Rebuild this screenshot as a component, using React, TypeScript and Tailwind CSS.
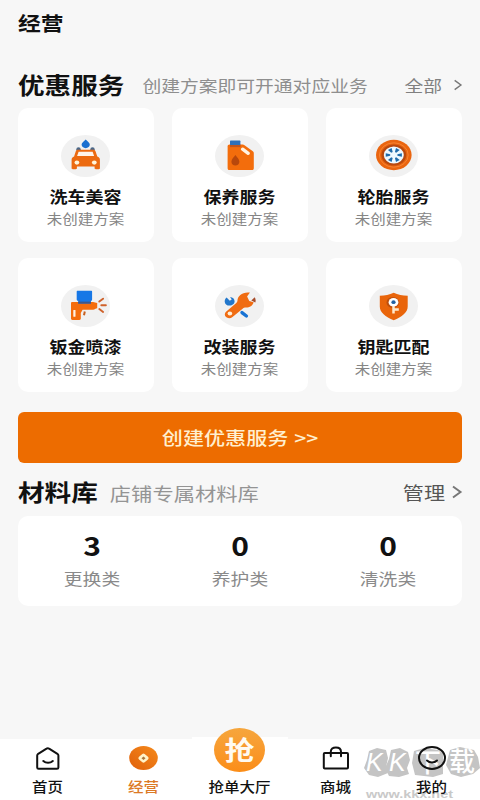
import type { ReactNode } from "react";
import clsx from "clsx";

type Service = { title: string; icon: ReactNode };

// CJK text is drawn slightly flattened everywhere in this skin
function Label({ className, children }: { className?: string; children: ReactNode }) {
  return (
    <span className={clsx("inline-block origin-center scale-y-[0.86] whitespace-nowrap leading-none", className)}>
      {children}
    </span>
  );
}

function IconDisc({ children }: { children: ReactNode }) {
  return (
    <svg width="49" height="42" viewBox="0 0 49 42" className="block">
      <ellipse cx="24.5" cy="21" rx="24.5" ry="21" fill="#f1f1f1" />
      {children}
    </svg>
  );
}

function CarWashIcon() {
  return (
    <IconDisc>
      <path d="M24.7 4.4c1.6 1.7 4.1 3 4.1 5.2 0 2.1-1.8 3.6-4.1 3.6s-4.1-1.5-4.1-3.6c0-2.2 2.5-3.5 4.1-5.2z" fill="#1a6fd0" />
      <circle cx="17.5" cy="14.5" r="2.2" fill="#4b6788" />
      <circle cx="31.5" cy="14.5" r="2.2" fill="#4b6788" />
      <path
        d="M17 14.8h15.2c1.3 0 2 .5 2.4 1.6l1.7 5.2c1.6.6 2.6 1.6 2.6 3.2v8.3c0 .8-.4 1.2-1.2 1.2h-2.9c-.8 0-1.2-.4-1.2-1.2V31.5H15.9v1.6c0 .8-.4 1.2-1.2 1.2h-2.9c-.8 0-1.2-.4-1.2-1.2v-8.3c0-1.6 1-2.6 2.5-3.2l1.6-5.2c.4-1.1 1.1-1.6 2.3-1.6z"
        fill="#ec6a10"
      />
      <path d="M17.6 16.8h14l1.5 4.3H16.1z" fill="#fff4ea" />
      <ellipse cx="15.9" cy="27.6" rx="2.4" ry="2.1" fill="#fff4d8" />
      <ellipse cx="33.3" cy="27.6" rx="2.4" ry="2.1" fill="#fff4d8" />
    </IconDisc>
  );
}

function OilIcon() {
  return (
    <IconDisc>
      <path d="M14.6 9.6h13c.8 0 1.3.2 1.9.6l8 5.9c.9.7 1.3 1.4 1.3 2.5v14.6c0 1.2-.8 1.9-2 1.9H14.6c-1.2 0-2-.7-2-1.900V11.5c0-1.200.8-1.900 2-1.900z" fill="#f36d0c" />
      <rect x="15" y="9.5" width="10.5" height="2.6" fill="#c2541a" />
      <rect x="15" y="5.6" width="10.4" height="4.4" rx=".6" fill="#2f70b8" />
      <path d="M27.6 14.2l5.6 4.1" stroke="#fff3e2" strokeWidth="3.4" strokeLinecap="round" />
      <path d="M20.4 20c1.7 2.2 4 4.3 4 6.8 0 2.2-1.7 3.7-4 3.7s-4-1.5-4-3.7c0-2.5 2.3-4.6 4-6.8z" fill="#b8480c" />
    </IconDisc>
  );
}

function TireIcon() {
  return (
    <IconDisc>
      <ellipse cx="24.8" cy="20" rx="17.8" ry="15.2" fill="#ea650f" />
      <ellipse cx="24.8" cy="20" rx="14.4" ry="12.2" fill="none" stroke="#f98a3c" strokeWidth=".8" />
      <ellipse cx="24.8" cy="20" rx="12.4" ry="10.6" fill="#b9490e" />
      <ellipse cx="24.8" cy="20" rx="10" ry="8.6" fill="#eef9ff" />
      {[0, 60, 120, 180, 240, 300].map((angle) => (
        <path
          key={angle}
          d="M-1.9-7.2h3.8L.7-3.2H-.7z"
          transform={`translate(24.8 20) scale(1.12 .96) rotate(${angle + 30})`}
          fill="#1f6cab"
        />
      ))}
    </IconDisc>
  );
}

function SprayIcon() {
  return (
    <IconDisc>
      <path d="M10 18.5c0-.9.5-1.4 1.4-1.4h20.7c1.7 0 2.3.8 4.1 1v5.2c-1.8.2-2.4 1.5-4.1 1.5H21.6l-1.8 3.3v5.5c0 .9-.5 1.4-1.4 1.4h-7c-.9 0-1.4-.5-1.4-1.4z" fill="#f46d0d" />
      <path d="M15.7 6.7c0-.7.3-1 1-1h13.4c.7 0 1 .3 1 1v7.6c0 1-.4 1.5-1.2 1.8v2.5H17.2v-2.5c-1-.3-1.5-.8-1.5-1.8z" fill="#1677e6" />
      <path d="M17.2 16.6h12.7v2H17.2z" fill="#3f5787" />
      <rect x="12.3" y="25" width="2.2" height="6.8" rx=".5" fill="#fff3e6" />
      <path d="M23.8 26.5l-.8 3.7" stroke="#c8601f" strokeWidth="2" />
      <path d="M38.3 16.6l3.8-2.9M40.3 20.3h4.6M38.3 24l3.8 2.9" stroke="#cf622b" strokeWidth="1.9" strokeLinecap="round" />
    </IconDisc>
  );
}

function WrenchIcon() {
  return (
    <IconDisc>
      <path d="M11.6 12.5l3.2 3.3 1.9-1.3-1.6-2.5c2.7.3 4.5 1.9 4.5 4.3 0 2.5-2.1 4.3-5 4.3-2.8 0-4.9-1.8-4.9-4.2 0-1.5.7-2.9 1.9-3.9z" fill="#2277cb" />
      <path d="M27 27.6l4.4 3.4" stroke="#1873d4" strokeWidth="3.4" strokeLinecap="round" />
      <path
        d="M34.9 7.6l-2.8 3.8 2.2 4.7 4.3 1.1c-.9 3.4-4 5.5-7.9 5.4-1.2 0-2 .2-2.8.9L17.5 32c-1.9 1.6-4.9 1.6-6.5.1-1.7-1.5-1.6-3.9.3-5.5l10-8.5c.8-.7 1.2-1.5 1.2-2.5.1-4.8 4.9-8.9 12.4-8z"
        fill="#f06c12"
      />
      <ellipse cx="14.9" cy="28.6" rx="2.3" ry="2" fill="#fff0d8" />
      <path d="M36.3 15.5l3.4-3.2c1 1.5 1.2 3.4.6 5.3z" fill="#a64c2b" />
    </IconDisc>
  );
}

function KeyIcon() {
  return (
    <IconDisc>
      <path d="M24.7 7.7c4.3 2.1 8.6 2.8 14 3v10.7c0 6-5.7 10.3-14 13.9-8.3-3.6-13.9-7.9-13.9-13.9V10.7c5.3-.2 9.6-.9 13.9-3z" fill="#e9650b" />
      <ellipse cx="23.8" cy="17.4" rx="6.3" ry="5.5" fill="#bd500f" />
      <ellipse cx="24.5" cy="17.2" rx="4.9" ry="4.3" fill="#fff" />
      <ellipse cx="24.5" cy="17.2" rx="2.1" ry="1.9" fill="#2162a3" />
      <path d="M24.5 21v7.5M24.5 24.5h5.3" stroke="#ffe9cc" strokeWidth="2.5" />
    </IconDisc>
  );
}

function Chevron({ className, width }: { className: string; width: number }) {
  return (
    <svg viewBox="0 0 12 14" fill="none" stroke="currentColor" strokeWidth={width} className={className}>
      <path d="M2 1.5l7.5 5.5L2 12.5" />
    </svg>
  );
}

const services: Service[] = [
  { title: "洗车美容", icon: <CarWashIcon /> },
  { title: "保养服务", icon: <OilIcon /> },
  { title: "轮胎服务", icon: <TireIcon /> },
  { title: "钣金喷漆", icon: <SprayIcon /> },
  { title: "改装服务", icon: <WrenchIcon /> },
  { title: "钥匙匹配", icon: <KeyIcon /> },
];

const materials = [
  { count: 3, name: "更换类" },
  { count: 0, name: "养护类" },
  { count: 0, name: "清洗类" },
];

function ServiceCard({ title, icon }: Service) {
  return (
    <div className="flex h-[134px] flex-col items-center rounded-[10px] bg-white pt-[27px] pr-px">
      {icon}
      <Label className="mt-[10px] text-[18px] font-bold text-[#111]">{title}</Label>
      <Label className="mt-[6px] text-[15.5px] text-[#858585]">未创建方案</Label>
    </div>
  );
}

function HomeIcon() {
  return (
    <svg width="26" height="24" viewBox="0 0 26 24" fill="none" stroke="#111" strokeWidth="2" strokeLinecap="round" strokeLinejoin="round">
      <path d="M2.2 9.6c0-.8.3-1.3 1-1.8l8.3-5.1c.9-.6 1.7-.6 2.6 0l8.3 5.1c.7.5 1 1 1 1.8v11.8c0 .9-.5 1.4-1.4 1.4H3.6c-.9 0-1.4-.5-1.4-1.4z" />
      <path d="M8.3 15c2.5 2.4 7 2.4 9.5 0" />
    </svg>
  );
}

function CoinIcon() {
  return (
    <svg width="29" height="24" viewBox="0 0 29 24">
      <defs>
        <linearGradient id="coin" x1="1" y1="0" x2="0" y2="1">
          <stop offset="0" stopColor="#f58a1c" />
          <stop offset="1" stopColor="#e0600a" />
        </linearGradient>
      </defs>
      <ellipse cx="14.5" cy="12" rx="14.3" ry="12" fill="url(#coin)" />
      <path d="M14.5 9.4l3.3 2.8-3.3 2.8-3.3-2.8z" fill="#fff3c9" stroke="#fff3c9" strokeWidth="3.6" strokeLinejoin="round" />
      <path d="M14.5 10.5l2 1.7-2 1.7-2-1.7z" fill="#a8743c" />
    </svg>
  );
}

function BagIcon() {
  return (
    <svg width="28" height="24" viewBox="0 0 28 24" fill="none" stroke="#111" strokeWidth="2" strokeLinecap="round" strokeLinejoin="round">
      <rect x="1.8" y="6.9" width="24.2" height="15.6" rx="1" />
      <path d="M8.8 10.3V5.8c0-2.7 2-4.4 5.1-4.4S19 3.1 19 5.8v4.5" />
    </svg>
  );
}

function FaceIcon() {
  return (
    <svg width="28" height="24" viewBox="0 0 28 24" fill="none" stroke="#111" strokeWidth="2" strokeLinecap="round">
      <ellipse cx="14" cy="12" rx="13" ry="10.9" />
      <path d="M9 14.5c2.8 2.6 7.2 2.6 10 0" />
    </svg>
  );
}

function Tab({ label, icon, active }: { label: string; icon: ReactNode; active?: boolean }) {
  return (
    <div className="relative z-10 flex w-24 flex-col items-center pr-px">
      <div className="mt-[7px] flex h-6 items-center">{icon}</div>
      <Label className={clsx("mt-[9px] text-[15.5px] font-medium", active ? "text-[#dc7a26]" : "text-[#111]")}>{label}</Label>
    </div>
  );
}

function Watermark() {
  return (
    <svg
      width="118"
      height="54"
      viewBox="0 0 118 54"
      className="absolute right-0 bottom-0"
      style={{ fontFamily: '"Liberation Sans", "Noto Sans CJK SC", sans-serif' }}
    >
      <g fill="#c4c4c4">
        <path d="M7 5l8-3 9 2 2 8-2 9 2 6-10 4-9-2-5-7 3-8z" />
        <path d="M29 4l9-2 8 4 2 8-3 8 2 6-10 3-10-1-4-8 4-9z" />
        <path d="M52 5l10-3 14 2 5 3v21l-10 3-18-2-3-12z" />
        <path d="M88 4l10-3 14 3 4 7 2 11-7 6-12 3-10-3-5-9z" />
      </g>
      <g fill="#fff">
        <text x="4" y="25" fontSize="25" fontStyle="italic">K</text>
        <text x="27" y="25" fontSize="25" fontStyle="italic">K</text>
        <text x="53" y="26" fontSize="26" fontWeight="500">下</text>
        <text x="87" y="25" fontSize="26" fontWeight="500">载</text>
      </g>
      <text x="4" y="51.5" fontSize="11" fontWeight="700" fill="#c9c9c9" textLength="87" lengthAdjust="spacingAndGlyphs">
        www.kkx.net
      </text>
    </svg>
  );
}

export default function App() {
  return (
    <div className="flex h-[800px] w-[480px] flex-col overflow-hidden bg-[#f7f7f7] font-['Noto_Sans_CJK_SC',sans-serif]">
      <header className="px-[18px] pt-[12px]">
        <Label className="block w-fit text-[22.8px] font-bold text-[#111]">经营</Label>
      </header>

      <main className="flex-1 px-[18px]">
        <section>
          <div className="mt-[34px] flex h-[28px] items-center">
            <Label className="-mt-px text-[26.6px] font-bold text-[#111]">优惠服务</Label>
            <Label className="ml-[18px] text-[18.8px] text-[#8e8e8e]">创建方案即可开通对应业务</Label>
            <Label className="ml-auto text-[18.8px] text-[#808080]">全部</Label>
            <Chevron className="mr-[-1px] ml-[11px] h-[12px] w-[10px] text-[#777]" width={1.7} />
          </div>
          <div className="mt-[9px] grid grid-cols-3 gap-x-[18px] gap-y-4">
            {services.map((service) => (
              <ServiceCard key={service.title} {...service} />
            ))}
          </div>
          <button className="mt-[20px] flex h-[51px] w-full items-center justify-center rounded-md bg-[#ed6c00] text-[#ffefcf]">
            <Label className="text-[21.1px] font-medium">
              创建优惠服务 <span className="ml-px">&gt;&gt;</span>
            </Label>
          </button>
        </section>

        <section>
          <div className="mt-[15px] flex h-[28px] items-center">
            <Label className="-mt-px text-[26.6px] font-bold text-[#111]">材料库</Label>
            <Label className="mt-px ml-[12px] text-[21.3px] text-[#949494]">店铺专属材料库</Label>
            <Label className="mt-[2px] ml-auto text-[21.1px] text-[#555]">管理</Label>
            <Chevron className="mr-[-1px] ml-[6px] h-[14px] w-[12px] text-[#777]" width={2} />
          </div>
          <div className="mt-[10px] grid h-[90px] grid-cols-3 rounded-[10px] bg-white pt-[14px]">
            {materials.map((item) => (
              <div key={item.name} className="flex flex-col items-center">
                <Label className="text-[30px] font-bold text-[#111]">{item.count}</Label>
                <Label className="mt-[9px] text-[18.8px] text-[#8a8a8a]">{item.name}</Label>
              </div>
            ))}
          </div>
        </section>
      </main>

      <nav className="relative flex h-[61px] bg-white">
        <Watermark />
        <Tab label="首页" icon={<HomeIcon />} />
        <Tab label="经营" icon={<CoinIcon />} active />
        <div className="relative z-10 -mt-[2px] flex w-24 flex-col items-center bg-white pr-px">
          <div className="-mt-[9px] flex h-[44px] w-[51px] items-center justify-center rounded-[50%] bg-linear-to-b from-[#f6a63c] to-[#fb8d17]">
            <Label className="-mt-[3px] scale-y-100 text-[30px] font-bold text-[#fffaf0]">抢</Label>
          </div>
          <Label className="mt-[7px] text-[15.5px] font-medium text-[#111]">抢单大厅</Label>
        </div>
        <Tab label="商城" icon={<BagIcon />} />
        <Tab label="我的" icon={<FaceIcon />} />
      </nav>
    </div>
  );
}
